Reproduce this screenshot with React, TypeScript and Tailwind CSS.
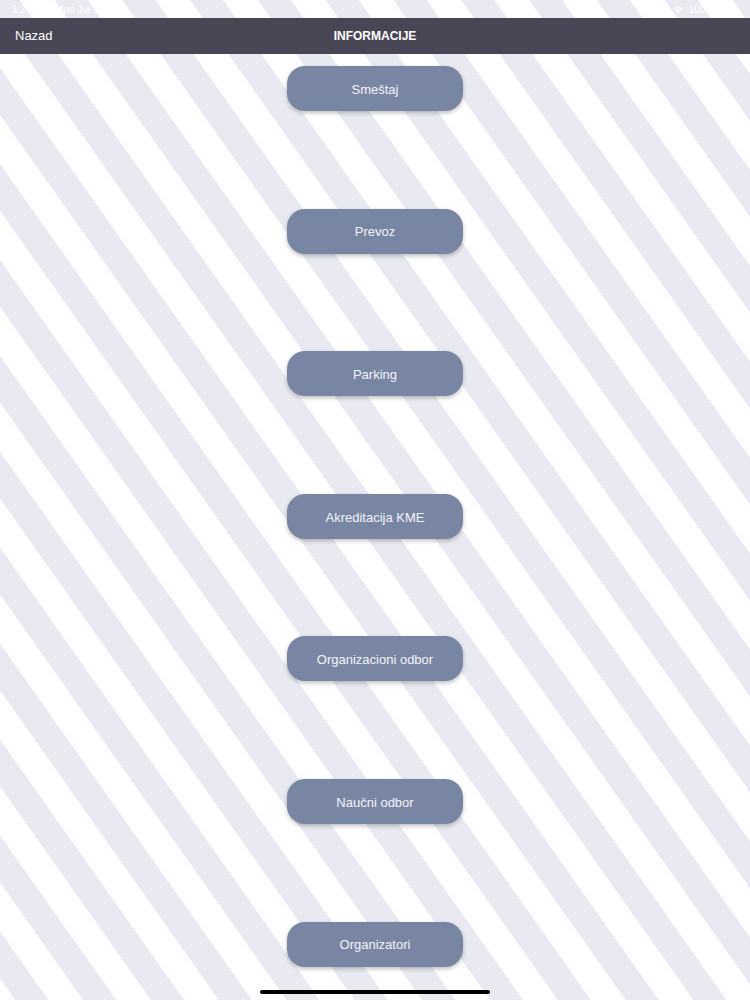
import React from "react";

const items = [
  "Smeštaj",
  "Prevoz",
  "Parking",
  "Akreditacija KME",
  "Organizacioni odbor",
  "Naučni odbor",
  "Organizatori",
];

export default function App() {
  return (
    <div
      className="relative w-[750px] h-[1000px] overflow-hidden bg-[repeating-linear-gradient(54.75deg,#ffffff_0px,#ffffff_12.56px,#e9e9f1_12.56px,#e9e9f1_39.56px,#ffffff_39.56px,#ffffff_55.37px)]"
      style={{ fontFamily: '"Liberation Sans", Arial, sans-serif' }}
    >
      {/* status bar */}
      <div className="h-[18px] flex items-center justify-between px-[12px] text-[10px] text-white">
        <div className="flex gap-[6px]">
          <span>1:25 PM</span>
          <span>Mon Jul 1</span>
        </div>
        <div className="flex items-center gap-[4px]">
          <svg width="12" height="9" viewBox="0 0 12 9" fill="white">
            <path d="M6 9 L4 6.8 A3 3 0 0 1 8 6.8 Z" />
            <path d="M2.6 5.3 A5 5 0 0 1 9.4 5.3 L8.5 6.3 A3.7 3.7 0 0 0 3.5 6.3 Z" />
            <path d="M1 3.6 A7.4 7.4 0 0 1 11 3.6 L10.1 4.6 A6 6 0 0 0 1.9 4.6 Z" />
          </svg>
          <span>100%</span>
          <div className="w-[20px] h-[9px] rounded-[2px] border border-white p-[1px]">
            <div className="w-full h-full bg-white rounded-[1px]" />
          </div>
        </div>
      </div>
      {/* nav bar */}
      <div className="relative h-[36px] bg-[#484655] flex items-center justify-center">
        <span className="absolute left-[15px] text-[13px] text-white">Nazad</span>
        <span className="text-[12px] font-bold text-white">INFORMACIJE</span>
      </div>
      {/* buttons */}
      <div className="flex flex-col items-center pt-[12px] gap-[97.6px]">
        {items.map((t) => (
          <div
            key={t}
            className="w-[176px] h-[45px] rounded-[18px] bg-[#7986a3] flex items-center justify-center pt-[2px] text-[13px] text-[#f3f4f8] shadow-[0_2px_4px_rgba(0,0,0,0.25)]"
          >
            {t}
          </div>
        ))}
      </div>
      {/* home indicator */}
      <div className="absolute left-[260px] bottom-[6px] w-[230px] h-[4px] rounded-full bg-black" />
    </div>
  );
}
